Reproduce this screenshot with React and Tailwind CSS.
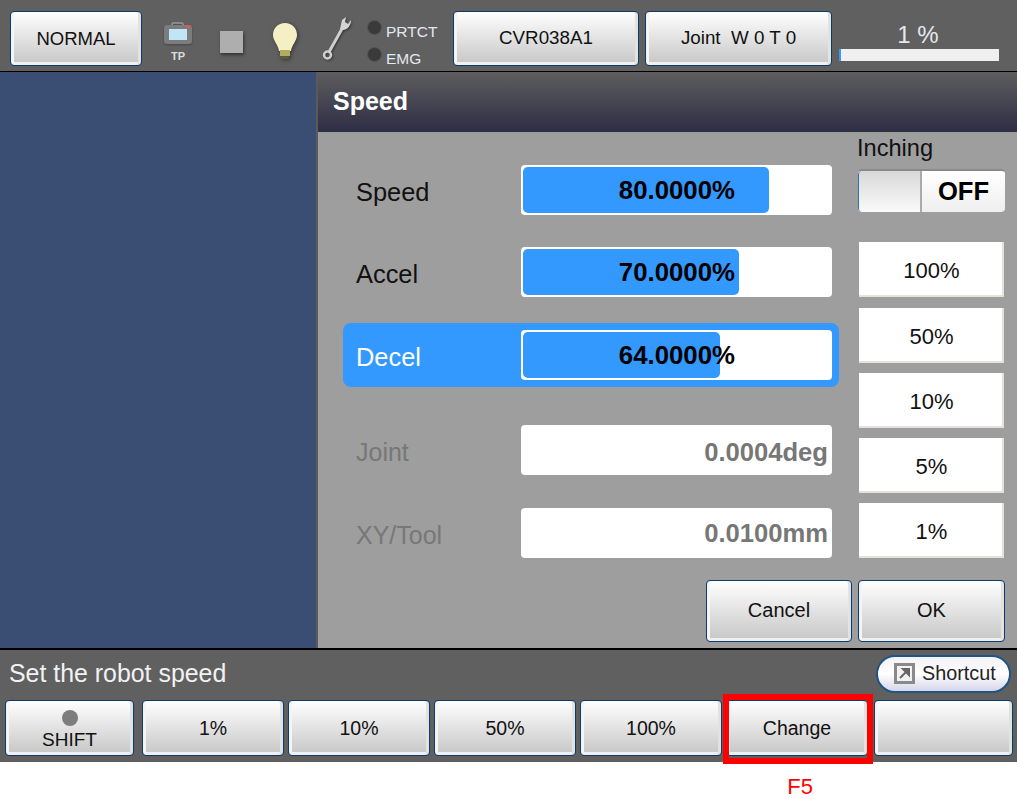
const sans = "font-['Liberation_Sans',Arial,sans-serif]";

function Btn({ className = "", children }) {
  return (
    <div
      className={`flex items-center justify-center rounded-[4px] border border-[#0a3a6e] bg-gradient-to-b from-white to-[#c6c6c6] text-[#111] shadow-[inset_3px_0_0_#f4f4f4,inset_-3px_0_0_#e2e2e2,inset_0_-3px_0_#f0f0f0] ${className}`}
    >
      {children}
    </div>
  );
}

function TpIcon() {
  return (
    <div className="flex w-[30px] flex-col items-center">
      <svg width="30" height="23" viewBox="0 0 30 23" className="drop-shadow-[0_1px_1px_#444]">
        <rect x="9" y="1" width="11" height="4" rx="1" fill="none" stroke="#9a9a9a" strokeWidth="1.5" />
        <rect x="1" y="3" width="28" height="19" rx="3" fill="#7c7c7c" />
        <rect x="23" y="3" width="4" height="3" fill="#d9575f" />
        <rect x="6" y="7" width="18" height="11" fill="#bfe6f5" />
      </svg>
      <span className="mt-[5px] text-[11px] leading-[12px] font-bold text-[#ddd]">TP</span>
    </div>
  );
}

function BulbIcon() {
  return (
    <svg width="26" height="38" viewBox="0 0 26 38" className="drop-shadow-[1px_1px_2px_#333]">
      <path d="M13 1C6 1 1 6 1 13c0 6 5 9 6 16h12c1-7 6-10 6-16C25 6 20 1 13 1z" fill="#f5f0c4" />
      <rect x="8" y="28" width="10" height="6" fill="#b3ad62" />
      <rect x="9" y="34" width="8" height="3" rx="1" fill="#5d5a3c" />
    </svg>
  );
}

function WrenchIcon() {
  return (
    <svg width="30" height="44" viewBox="0 0 30 44" className="drop-shadow-[1px_1px_1px_#333]">
      <path d="M8 35L22 10" stroke="#cfcfcf" strokeWidth="3" />
      <path d="M19 12L21 3L25 0L24 5L27 7L30 3C30 9 26 13 22 13Z" fill="#d4d4d4" />
      <circle cx="6.5" cy="38" r="3.5" fill="none" stroke="#cfcfcf" strokeWidth="2.5" />
    </svg>
  );
}

function Led({ label }) {
  return (
    <div className="flex h-[27px] items-center gap-[4px]">
      <div className="h-[15px] w-[15px] rounded-full border border-[#555] bg-[#3a3a3a]" />
      <span className="mt-[8px] text-[15.5px] leading-none text-[#e4e8ee]">{label}</span>
    </div>
  );
}

function TopBar() {
  return (
    <div className="flex h-[72px] shrink-0 items-start border-b border-black bg-[#606060] pl-[10px] pt-[11px]">
      <Btn className="h-[55px] w-[132px] text-[18.5px]">NORMAL</Btn>
      <div className="ml-[21px] mt-[11px]"><TpIcon /></div>
      <div className="ml-[27px] mt-[20px] h-[22px] w-[23px] bg-[#aeaeae] shadow-[1px_2px_3px_#333]" />
      <div className="ml-[29px] mt-[11px]"><BulbIcon /></div>
      <div className="ml-[23px] mt-[6px]"><WrenchIcon /></div>
      <div className="ml-[16px] mt-[3px] w-[86px]">
        <Led label="PRTCT" />
        <Led label="EMG" />
      </div>
      <Btn className="h-[55px] w-[186px] text-[18.8px]">CVR038A1</Btn>
      <Btn className="ml-[6px] h-[55px] w-[187px] text-[18.8px]">
        <span className="whitespace-pre">Joint  W 0 T 0</span>
      </Btn>
      <div className="ml-[7px] w-[160px]">
        <div className="h-[38px] pr-[2px] pt-[10px] text-center text-[24px] leading-[28px] text-[#e4e8ee]">1 %</div>
        <div className="h-[12px] bg-[#f0f0f0]">
          <div className="h-full w-[2px] bg-[#3399ff]" />
        </div>
      </div>
    </div>
  );
}

function ValueBar({ value, fill }) {
  return (
    <div className="relative h-[50px] w-[311px] rounded-[4px] bg-white">
      <div
        className="absolute inset-y-[2px] left-[2px] rounded-[5px] bg-[#3399ff]"
        style={{ width: fill }}
      />
      <div className="absolute inset-y-0 right-[97px] flex items-center text-[25.8px] font-bold text-black">
        {value}
      </div>
    </div>
  );
}

function Row({ label, value, fill, className = "" }) {
  return (
    <div className={`flex items-center ${className}`}>
      <span className="w-[178px] pl-[13px] pt-[4px] text-[25.4px] text-[#111]">{label}</span>
      <ValueBar value={value} fill={fill} />
    </div>
  );
}

function StepRow({ label, value, className = "", valueClass = "" }) {
  return (
    <div className={`flex items-center ${className}`}>
      <span className="w-[178px] pl-[13px] pt-[6px] text-[25px] text-[#777]">{label}</span>
      <div className={`flex h-[50px] w-[311px] items-center justify-end rounded-[4px] bg-white pr-[4px] text-[25.6px] font-bold text-[#777] ${valueClass}`}>
        {value}
      </div>
    </div>
  );
}

function Preset({ label, className = "" }) {
  return (
    <div className={`flex h-[55px] w-[145px] items-center justify-center bg-white pt-[1px] text-[22px] text-[#111] shadow-[inset_-2px_-2px_0_#e4e2da] ${className}`}>
      {label}
    </div>
  );
}

function SpeedPanel() {
  return (
    <div className="ml-[2px] flex flex-1 flex-col bg-[#9e9e9e]">
      <div className="flex h-[60px] items-center bg-gradient-to-b from-[#5e5e5e] to-[#2f2d45] pl-[15px] text-[25px] font-bold text-white">
        Speed
      </div>
      <div className="flex flex-1 pl-[25px]">
        <div className="w-[496px] pt-[33px]">
          <Row label="Speed" value="80.0000%" fill="246px" />
          <Row label="Accel" value="70.0000%" fill="216px" className="mt-[32px]" />
          <div className="mt-[26px] flex h-[64px] items-center rounded-[8px] bg-[#3399ff]">
            <span className="w-[178px] pl-[13px] pt-[4px] text-[25.4px] text-white">Decel</span>
            <ValueBar value="64.0000%" fill="197px" />
          </div>
          <StepRow label="Joint" value="0.0004deg" className="mt-[38px]" valueClass="pt-[4px]" />
          <StepRow label="XY/Tool" value="0.0100mm" className="mt-[33px]" />
        </div>
        <div className="ml-[19px] w-[148px]">
          <div className="-ml-[1px] h-[37px] pt-[2px] text-[23.6px] leading-[28px] text-[#111]">Inching</div>
          <div className="flex h-[43px] w-[147px] overflow-hidden rounded-[4px] border-t-2 border-t-[#8a8a8a] bg-gradient-to-b from-white to-[#efefef]">
            <div className="h-full w-[64px] rounded-l-[4px] border-r-2 border-l border-r-[#aaa] border-l-[#2f6fae] bg-gradient-to-b from-[#d8d8d8] to-[#fafafa]" />
            <div className="flex flex-1 items-center justify-center text-[25.6px] font-bold text-black">OFF</div>
          </div>
          <div className="mt-[30px] flex flex-col gap-[10px] pl-[1px]">
            <Preset label="100%" />
            <Preset label="50%" className="mt-[1px]" />
            <Preset label="10%" />
            <Preset label="5%" />
            <Preset label="1%" />
          </div>
          <div className="-ml-[152px] mt-[22px] flex gap-[6px]">
            <Btn className="h-[62px] w-[146px] pb-[2px] text-[20px]">Cancel</Btn>
            <Btn className="h-[62px] w-[147px] pb-[2px] text-[20px]">OK</Btn>
          </div>
        </div>
      </div>
    </div>
  );
}

function BottomBar() {
  return (
    <div className="h-[114px] shrink-0 border-t-2 border-black bg-[#606060]">
      <div className="flex h-[50px] items-center justify-between pb-[3px] pl-[9px] pr-[6px]">
        <span className="text-[24.9px] text-[#f2f2f2]">Set the robot speed</span>
        <div className="flex h-[38px] w-[135px] items-center rounded-full border-2 border-[#1f5484] bg-gradient-to-b from-[#f2f2f8] via-white to-[#d6d6ea] pl-[16px] text-[19.8px] text-[#222]">
          <svg width="21" height="21" viewBox="0 0 21 21" className="mr-[7px]">
            <rect x="1.5" y="1.5" width="18" height="18" fill="#f2f2f2" stroke="#8a8a8a" strokeWidth="3" />
            <path d="M6 15l6-6M9 6h6v6z" stroke="#666" strokeWidth="2" fill="#666" />
          </svg>
          Shortcut
        </div>
      </div>
      <div className="flex items-start pl-[5px] text-[19.5px]">
        <Btn className="h-[56px] w-[129px] flex-col gap-[3px] pt-[5px]">
          <div className="h-[16px] w-[16px] rounded-full bg-[#7d7d7d]" />
          <span className="text-[19px] leading-[22px]">SHIFT</span>
        </Btn>
        <Btn className="ml-[8px] h-[56px] w-[142px] pt-[1px]">1%</Btn>
        <Btn className="ml-[4px] h-[56px] w-[142px] pt-[1px]">10%</Btn>
        <Btn className="ml-[4px] h-[56px] w-[142px] pt-[1px]">50%</Btn>
        <Btn className="ml-[4px] h-[56px] w-[142px] pt-[1px]">100%</Btn>
        <div className="relative ml-[4px]">
          <Btn className="h-[56px] w-[142px] pt-[1px]">Change</Btn>
          <div className="absolute -left-[3px] -right-[5px] -top-[6px] -bottom-[8px] border-[6px] border-[#ff0000]" />
        </div>
        <Btn className="ml-[6px] h-[56px] w-[139px]" />
      </div>
    </div>
  );
}

export default function App() {
  return (
    <div className={`flex h-[799px] w-[1017px] flex-col overflow-hidden bg-white ${sans}`}>
      <TopBar />
      <div className="flex h-[576px] shrink-0 bg-[#5a5a5a]">
        <div className="w-[316px] bg-[#3a4d73]" />
        <SpeedPanel />
      </div>
      <BottomBar />
      <div className="w-[871px] pt-[12px] text-right text-[22px] leading-[25px] text-[#ff0000]">
        <span className="mr-[58px]">F5</span>
      </div>
    </div>
  );
}
